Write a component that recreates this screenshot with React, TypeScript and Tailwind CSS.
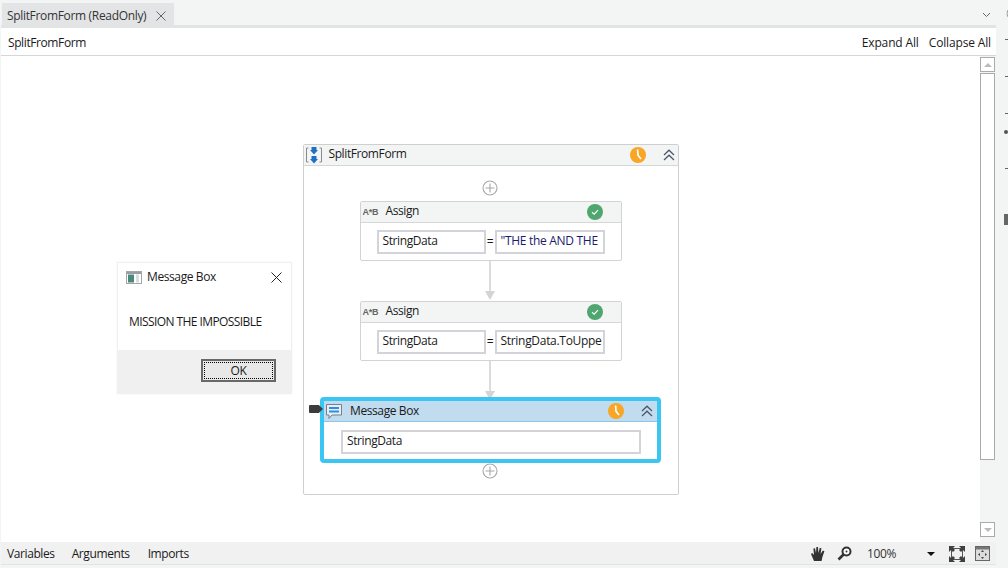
import React from 'react';

const ClockBadge = () => (
  <svg width="16" height="16" viewBox="0 0 16 16" className="shrink-0">
    <circle cx="8" cy="8" r="8" fill="#f9a526" />
    <path d="M7.6 2.5 L8 8.2 L11 12" fill="none" stroke="#fff" strokeWidth="1.7" />
  </svg>
);

const CheckBadge = () => (
  <svg width="16" height="16" viewBox="0 0 16 16" className="shrink-0">
    <circle cx="8" cy="8" r="8" fill="#4fa66e" />
    <path d="M5 8.3 L7.2 10.2 L11 6.2" fill="none" stroke="#fff" strokeWidth="1.2" />
  </svg>
);

const Chevrons = () => (
  <svg width="12" height="12" viewBox="0 0 12 12" className="shrink-0">
    <path d="M1 6 L6 1.2 L11 6 M1 11 L6 6.2 L11 11" fill="none" stroke="#4a5568" strokeWidth="1.2" />
  </svg>
);

const PlusCircle = () => (
  <svg width="16" height="16" viewBox="0 0 16 16" className="shrink-0 mr-[2px]">
    <circle cx="8" cy="8" r="7" fill="#fff" stroke="#a8a8a8" strokeWidth="1.1" />
    <path d="M3.5 8 H12.5 M8 3.5 V12.5" stroke="#a8a8a8" strokeWidth="1.1" />
  </svg>
);

const Arrow = () => (
  <div className="flex flex-col items-center h-[40px] mr-[2px]">
    <div className="w-[2px] h-[30px] bg-[#dcdcdc]" />
    <div className="w-0 h-0 border-x-[5px] border-x-transparent border-t-[9px] border-t-[#d4d4d4]" />
  </div>
);

const AssignIcon = () => (
  <span className="w-[16px] text-[9px] leading-none font-bold text-[#666] whitespace-nowrap tracking-[-0.3px] font-['Liberation_Sans',sans-serif]">A*B</span>
);

const Field = ({ text, className }: { text: string; className: string }) => (
  <div className={`h-[24px] bg-white border-2 border-[#d3d3da] flex items-center pl-[4px] overflow-hidden whitespace-nowrap ${className}`}>
    <span className="-translate-y-px">{text}</span>
  </div>
);

const AssignCard = ({ left, right, rightColor }: { left: string; right: string; rightColor: string }) => (
  <div className="w-[262px] h-[60px] border border-[#d3d3d3] rounded-[2px] bg-white">
    <div className="h-[21px] bg-[#f3f5f5] border-b border-[#d6d6d6] flex items-center pl-[2px] pr-[18px]">
      <AssignIcon />
      <span className="ml-[7px] -translate-y-px">Assign</span>
      <span className="ml-auto"><CheckBadge /></span>
    </div>
    <div className="flex items-center pl-[16px] pt-[7px]">
      <Field text={left} className="w-[109px]" />
      <span className="w-[9px] text-center">=</span>
      <Field text={right} className={`w-[110px] tracking-[-0.3px] ${rightColor}`} />
    </div>
  </div>
);

const SequenceIcon = () => (
  <svg width="18" height="18" viewBox="0 0 18 18" className="shrink-0">
    <path d="M3.5 2 H1.5 V16 H3.5 M14.5 2 H16.5 V16 H14.5" fill="none" stroke="#8a8a8a" strokeWidth="1" />
    <rect x="6.5" y="1" width="5" height="3" fill="#1f6fc4" />
    <path d="M5 4 H13 L9 8.5 Z" fill="#1f6fc4" />
    <rect x="6.5" y="10" width="5" height="3" fill="#1f6fc4" />
    <path d="M5 13 H13 L9 17.5 Z" fill="#1f6fc4" />
  </svg>
);

const ChatIcon = () => (
  <svg width="16" height="17" viewBox="0 0 16 17" className="shrink-0">
    <path d="M0.5 1.5 H15.5 V12 H6 L3 15.5 V12 H0.5 Z" fill="#e6eff7" stroke="#77808a" strokeWidth="1" />
    <rect x="3" y="4" width="10" height="2" fill="#2d8fe0" />
    <rect x="3" y="7.5" width="10" height="2" fill="#2d8fe0" />
  </svg>
);

const HandIcon = () => (
  <svg width="16" height="16" viewBox="0 0 16 16">
    <path d="M4 15 L1 8 L2.2 7 L4 9 L3.4 2.5 L5 2.2 L6 7 L6.4 1 L8 1 L8.4 7 L9.8 1.8 L11.4 2.2 L10.6 8 L12.8 4.6 L14.4 5.2 L12.4 11 L11.6 15 Z" fill="#333" />
  </svg>
);

const SearchIcon = () => (
  <svg width="15" height="15" viewBox="0 0 15 15">
    <circle cx="9.5" cy="5.5" r="4" fill="#fff" stroke="#333" strokeWidth="2" />
    <circle cx="9.5" cy="5.5" r="1" fill="#333" />
    <path d="M6.5 8.5 L1.5 13.5" stroke="#333" strokeWidth="2.6" />
  </svg>
);

const FitIcon = () => (
  <svg width="16" height="16" viewBox="0 0 16 16">
    <rect x="2.5" y="2.5" width="11" height="11" fill="none" stroke="#555" strokeWidth="1" />
    <path d="M0 0 H6 L4 2 L6 4 L4 6 L2 4 L0 6 Z M16 0 V6 L14 4 L12 6 L10 4 L12 2 L10 0 Z M0 16 V10 L2 12 L4 10 L6 12 L4 14 L6 16 Z M16 16 H10 L12 14 L10 12 L12 10 L14 12 L16 10 Z" fill="#3f3f3f" />
  </svg>
);

const OverviewIcon = () => (
  <svg width="15" height="15" viewBox="0 0 15 15">
    <rect x="0.5" y="0.5" width="14" height="14" fill="#dcdcdc" stroke="#666" strokeWidth="1" />
    <rect x="1" y="1" width="13" height="2.5" fill="#777" />
    <path d="M7.5 4 L9 6 H6 Z M7.5 13 L9 11 H6 Z M3 8.5 L5 7 V10 Z M12 8.5 L10 7 V10 Z" fill="#444" />
  </svg>
);

const DialogIcon = () => (
  <svg width="16" height="13" viewBox="0 0 16 13">
    <rect x="0.5" y="0.5" width="15" height="12" fill="#fff" stroke="#a5a5a5" strokeWidth="1" />
    <rect x="1" y="1" width="14" height="2" fill="#9a9ea3" />
    <rect x="2" y="3.5" width="6" height="8" fill="#4a8a7c" />
    <rect x="10" y="3.5" width="3" height="8" fill="#d5e0dc" />
  </svg>
);

export default function App() {
  return (
    <div className="relative w-[1008px] h-[568px] overflow-hidden bg-[#f3f5f5] text-[12px] text-[#1a1a1a] font-['Open_Sans',sans-serif] tracking-[-0.4px] flex flex-col">
      <div className="h-[25px] pt-[3px] flex items-stretch shrink-0 pr-[17px]">
        <div className="ml-[2px] w-[172px] bg-[#e3e4e6] flex items-center pl-[5px] pt-[3px] text-[#333] tracking-[-0.33px]">
          <span>SplitFromForm (ReadOnly)</span>
          <svg width="10" height="10" viewBox="0 0 10 10" className="ml-[10px]">
            <path d="M0.5 0.5 L9.5 9.5 M9.5 0.5 L0.5 9.5" stroke="#666" strokeWidth="1" />
          </svg>
        </div>
        <svg width="9" height="6" viewBox="0 0 9 6" className="ml-auto self-center mt-[2px]">
          <path d="M1 1 L4.5 4.5 L8 1" fill="none" stroke="#666" strokeWidth="1" />
        </svg>
      </div>

      <div className="flex flex-1 min-h-0">
        <div className="w-[995px] ml-[1px] flex flex-col border-t-[3px] border-[#e2e4e4]">
          <div className="h-[28px] bg-white border-b border-[#d6d6d6] flex items-center justify-between pl-[7px] pr-[5px] pt-[2px] shrink-0">
            <span>SplitFromForm</span>
            <div className="flex gap-[10px] tracking-[-0.15px]">
              <span>Expand All</span>
              <span>Collapse All</span>
            </div>
          </div>

          <div className="flex flex-1 min-h-0 bg-white">
            <div className="relative flex-1 flex justify-center pt-[88px]">
              <div className="absolute left-[116px] top-[206px] w-[175px] h-[132px] bg-white border border-[#f0f0f0] shadow-[0_0_1px_#e5e5e5] flex flex-col">
                <div className="h-[28px] flex items-center pl-[8px] pr-[9px]">
                  <DialogIcon />
                  <span className="ml-[5px]">Message Box</span>
                  <svg width="11" height="11" viewBox="0 0 11 11" className="ml-auto">
                    <path d="M0.5 0.5 L10.5 10.5 M10.5 0.5 L0.5 10.5" stroke="#222" strokeWidth="1" />
                  </svg>
                </div>
                <div className="flex-1 pl-[11px] pt-[22px] tracking-[-0.58px]">MISSION THE IMPOSSIBLE</div>
                <div className="h-[43px] bg-[#f0f0f0] flex justify-end items-start pt-[9px] pr-[15px]">
                  <div className="w-[75px] h-[23px] bg-[#e8e8e8] border-2 border-[#696969] p-[1px]">
                    <div className="w-full h-full border border-dotted border-black flex items-center justify-center">OK</div>
                  </div>
                </div>
              </div>

              <div className="w-[376px] h-[351px] border border-[#cfcfcf] rounded-[2px] bg-white flex flex-col items-center">
                <div className="w-full h-[21px] bg-[#f3f5f5] border-b border-[#d6d6d6] flex items-center pl-[1px] pr-[3px] shrink-0">
                  <SequenceIcon />
                  <span className="ml-[6px] -translate-y-px">SplitFromForm</span>
                  <span className="ml-auto mr-[17px]"><ClockBadge /></span>
                  <Chevrons />
                </div>
                <div className="mt-[14px] h-[16px]"><PlusCircle /></div>
                <div className="mt-[5px]">
                  <AssignCard left="StringData" right={'"THE the AND THE'} rightColor="text-[#1b1b6b]" />
                </div>
                <Arrow />
                <AssignCard left="StringData" right="StringData.ToUppe" rightColor="" />
                <Arrow />
                <div className="relative mt-[-4px] w-[341px] h-[66px] rounded-[4px] border-[4px] border-[#3ac5f3] bg-white">
                  <div className="h-[21px] bg-[#c1dbef] border-b border-[#8fc4e8] flex items-center pl-[2px] pr-[4px]">
                    <ChatIcon />
                    <span className="ml-[8px]">Message Box</span>
                    <span className="ml-auto mr-[17px]"><ClockBadge /></span>
                    <Chevrons />
                  </div>
                  <Field text="StringData" className="mt-[8px] ml-[17px] w-[300px]" />
                  <div className="absolute left-[-15px] top-[4px] w-[14px] h-[8px] bg-[#3c3c3c] rounded-l-[1px] [clip-path:polygon(0_0,70%_0,100%_50%,70%_100%,0_100%)]" />
                </div>
                <div className="h-[16px]"><PlusCircle /></div>
              </div>
            </div>

            <div className="w-[16px] bg-[#f3f5f5] flex flex-col pt-[1px] pb-[5px] shrink-0">
              <div className="w-[15px] h-[15px] border border-[#aaa] bg-white flex items-center justify-center">
                <div className="w-0 h-0 border-x-[4px] border-x-transparent border-b-[4px] border-b-[#bbb]" />
              </div>
              <div className="w-[15px] h-[387px] mt-[1px] border border-[#aaa] bg-white" />
              <div className="flex-1" />
              <div className="w-[15px] h-[15px] border border-[#aaa] bg-white flex items-center justify-center">
                <div className="w-0 h-0 border-x-[4px] border-x-transparent border-t-[4px] border-t-[#bbb]" />
              </div>
            </div>
          </div>

          <div className="h-[23px] bg-[#f1f1f1] border-b border-[#e2e4e4] flex items-center pl-[6px] pr-[6px] pt-[1px] shrink-0">
            <span>Variables</span>
            <span className="ml-[17px]">Arguments</span>
            <span className="ml-[18px]">Imports</span>
            <div className="ml-auto flex items-center">
              <HandIcon />
              <span className="ml-[11px]"><SearchIcon /></span>
              <span className="ml-[15px] text-[#333]">100%</span>
              <div className="ml-[31px] w-0 h-0 border-x-[4px] border-x-transparent border-t-[4px] border-t-[#111]" />
              <span className="ml-[14px]"><FitIcon /></span>
              <span className="ml-[10px]"><OverviewIcon /></span>
            </div>
          </div>
          <div className="h-[3px] shrink-0" />
        </div>

        <div className="flex-1 relative overflow-hidden">
          <div className="absolute left-[9px] top-[14px] w-[3px] h-[1px] bg-[#7a5a5a]" />
          <div className="absolute left-[9px] top-[51px] w-[3px] h-[1px] bg-[#7a5a5a]" />
          <div className="absolute left-[9px] top-[88px] w-[3px] h-[1px] bg-[#7a5a5a]" />
          <div className="absolute left-[8px] top-[105px] w-[4px] h-[4px] rounded-full bg-[#555]" />
          <div className="absolute left-[9px] top-[143px] w-[3px] h-[1px] bg-[#7a5a5a]" />
          <div className="absolute left-[8px] top-[189px] w-[4px] h-[11px] bg-[#666]" />
        </div>
      </div>

      <svg width="4" height="11" viewBox="0 0 4 11" className="absolute left-[1006px] top-[8px]">
        <path d="M3 1 C0.5 3 0.5 8 3 10" fill="none" stroke="#999" strokeWidth="1" />
      </svg>
    </div>
  );
}
